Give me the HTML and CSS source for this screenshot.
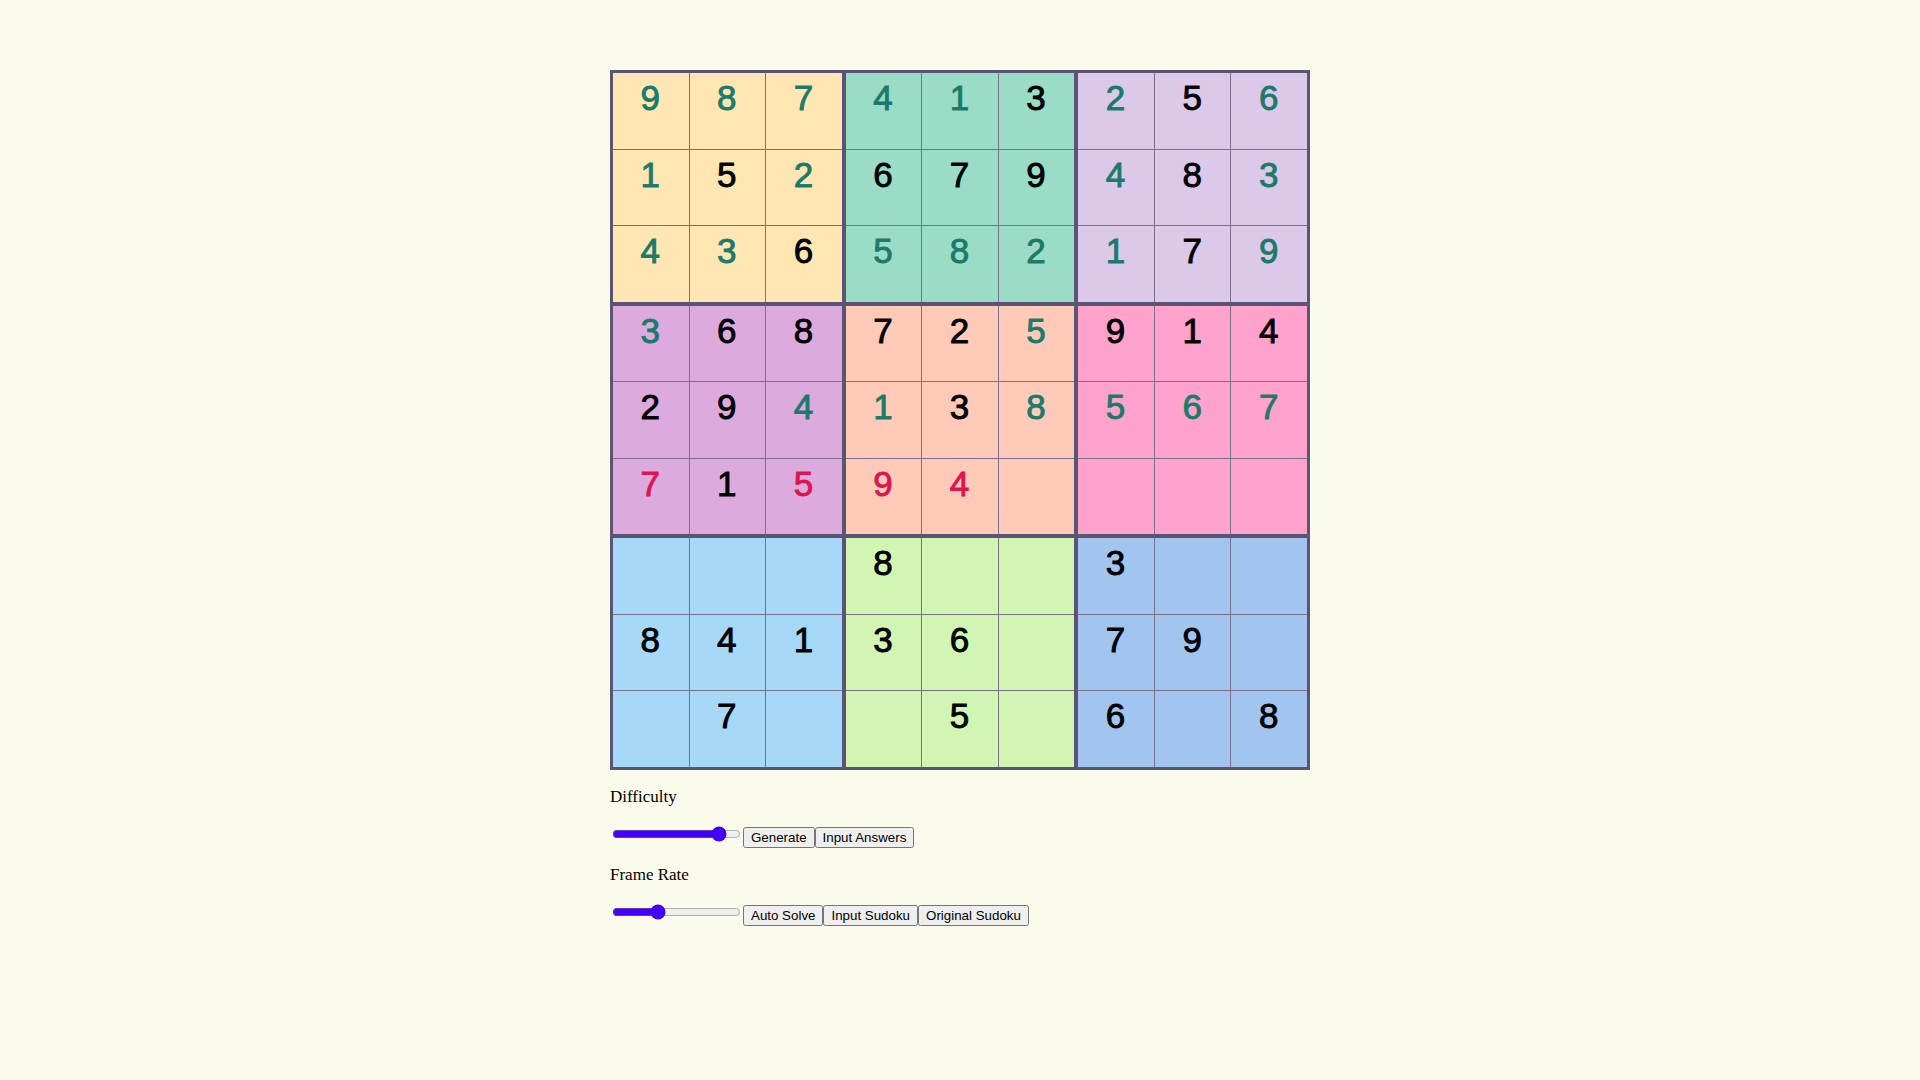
FILE: index.html
```html
<!DOCTYPE html>
<html lang="en">
<head>
<meta charset="utf-8">
<title>Sudoku</title>
<link rel="stylesheet" href="styles.css">
</head>
<body>
<main class="page">
  <div class="board">
    <div class="box b1">
      <div class="cell g">9</div><div class="cell g">8</div><div class="cell g">7</div>
      <div class="cell g">1</div><div class="cell k">5</div><div class="cell g">2</div>
      <div class="cell g">4</div><div class="cell g">3</div><div class="cell k">6</div>
    </div>
    <div class="box b2">
      <div class="cell g">4</div><div class="cell g">1</div><div class="cell k">3</div>
      <div class="cell k">6</div><div class="cell k">7</div><div class="cell k">9</div>
      <div class="cell g">5</div><div class="cell g">8</div><div class="cell g">2</div>
    </div>
    <div class="box b3">
      <div class="cell g">2</div><div class="cell k">5</div><div class="cell g">6</div>
      <div class="cell g">4</div><div class="cell k">8</div><div class="cell g">3</div>
      <div class="cell g">1</div><div class="cell k">7</div><div class="cell g">9</div>
    </div>
    <div class="box b4">
      <div class="cell g">3</div><div class="cell k">6</div><div class="cell k">8</div>
      <div class="cell k">2</div><div class="cell k">9</div><div class="cell g">4</div>
      <div class="cell r">7</div><div class="cell k">1</div><div class="cell r">5</div>
    </div>
    <div class="box b5">
      <div class="cell k">7</div><div class="cell k">2</div><div class="cell g">5</div>
      <div class="cell g">1</div><div class="cell k">3</div><div class="cell g">8</div>
      <div class="cell r">9</div><div class="cell r">4</div><div class="cell"></div>
    </div>
    <div class="box b6">
      <div class="cell k">9</div><div class="cell k">1</div><div class="cell k">4</div>
      <div class="cell g">5</div><div class="cell g">6</div><div class="cell g">7</div>
      <div class="cell"></div><div class="cell"></div><div class="cell"></div>
    </div>
    <div class="box b7">
      <div class="cell"></div><div class="cell"></div><div class="cell"></div>
      <div class="cell k">8</div><div class="cell k">4</div><div class="cell k">1</div>
      <div class="cell"></div><div class="cell k">7</div><div class="cell"></div>
    </div>
    <div class="box b8">
      <div class="cell k">8</div><div class="cell"></div><div class="cell"></div>
      <div class="cell k">3</div><div class="cell k">6</div><div class="cell"></div>
      <div class="cell"></div><div class="cell k">5</div><div class="cell"></div>
    </div>
    <div class="box b9">
      <div class="cell k">3</div><div class="cell"></div><div class="cell"></div>
      <div class="cell k">7</div><div class="cell k">9</div><div class="cell"></div>
      <div class="cell k">6</div><div class="cell"></div><div class="cell k">8</div>
    </div>
  </div>

  <p class="label label-first">Difficulty</p>
  <div class="row row-first">
    <input class="slider" type="range" min="0" max="100" value="88">
    <button class="btn">Generate</button><button class="btn">Input Answers</button>
  </div>

  <p class="label label-second">Frame Rate</p>
  <div class="row row-second">
    <input class="slider" type="range" min="0" max="100" value="34">
    <button class="btn">Auto Solve</button><button class="btn">Input Sudoku</button><button class="btn">Original Sudoku</button>
  </div>
</main>
</body>
</html>
```

FILE: styles.css
```css
html, body {
  margin: 0;
  padding: 0;
  background: #fbfbeb;
}

body {
  font-family: "Liberation Serif", "Times New Roman", serif;
  color: #000;
}

.page {
  width: 700px;
  margin: 0 auto;
  padding-top: 70px;
}

.board {
  box-sizing: border-box;
  width: 700px;
  height: 700px;
  border: 3px solid #5c5474;
  background: #5c5474;
  display: grid;
  grid-template-columns: repeat(3, 1fr);
  grid-template-rows: repeat(3, 1fr);
  gap: 4px;
}

.box {
  display: grid;
  grid-template-columns: repeat(3, 1fr);
  grid-template-rows: repeat(3, 1fr);
  gap: 1px;
  background: #7a7089;
}

.cell {
  box-sizing: border-box;
  padding-top: 7px;
  padding-right: 1px;
  text-align: center;
  font-family: "Liberation Sans", Arial, sans-serif;
  font-size: 35px;
  line-height: 35px;
  -webkit-text-stroke: 0.9px currentColor;
}

.b1 .cell { background: #ffe6b3; }
.b2 .cell { background: #9bdcc6; }
.b3 .cell { background: #dcc9ea; }
.b4 .cell { background: #dcaadc; }
.b5 .cell { background: #ffcbb8; }
.b6 .cell { background: #ffa3cc; }
.b7 .cell { background: #a5d9f7; }
.b8 .cell { background: #d1f5b3; }
.b9 .cell { background: #a1c5ef; }

.g { color: #1b7a6a; }
.k { color: #000; }
.r { color: #dc1450; }

.label {
  margin: 0;
  font-size: 17px;
  line-height: 20px;
}

.label-first { margin-top: 17px; }
.label-second { margin-top: 17px; }

.row {
  display: flex;
  align-items: flex-start;
  height: 21px;
}

.row-first { margin-top: 20px; }
.row-second { margin-top: 20px; }

.slider {
  width: 129px;
  height: 16px;
  margin: -1px 2px 0 2px;
  accent-color: #4400ff;
}

.btn {
  font-family: "Liberation Sans", Arial, sans-serif;
  font-size: 13.333px;
  color: #000;
  margin: 0;
}
```
